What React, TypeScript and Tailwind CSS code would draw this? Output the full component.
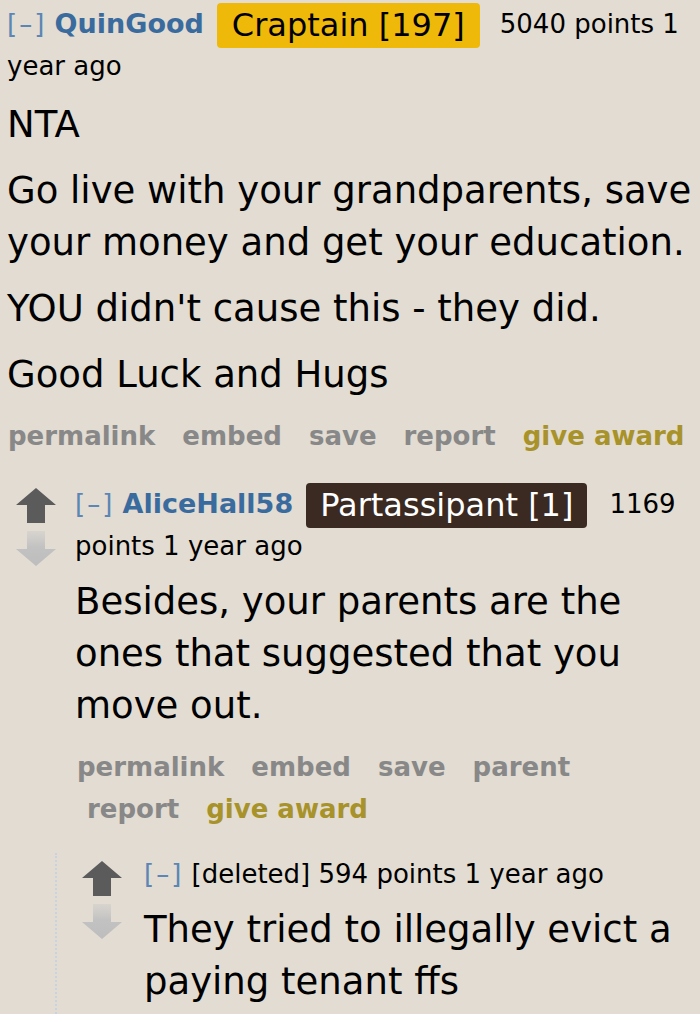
import React from "react";

const font = { fontFamily: '"DejaVu Sans", Verdana, sans-serif' };

function UpArrow() {
  return (
    <svg width="40" height="35" viewBox="0 0 40 35" className="block">
      <path d="M20 0 L40 17 L29 17 L29 35 L11 35 L11 17 L0 17 Z" fill="#5b5b5b" />
    </svg>
  );
}

function DownArrow() {
  return (
    <svg width="40" height="35" viewBox="0 0 40 35" className="block">
      <defs>
        <linearGradient id="dg" x1="0" y1="0" x2="0" y2="1">
          <stop offset="0" stopColor="#c8c8c8" stopOpacity="0.4" />
          <stop offset="0.45" stopColor="#c2c2c2" />
          <stop offset="1" stopColor="#bdbdbd" />
        </linearGradient>
      </defs>
      <path d="M20 35 L40 18 L29 18 L29 0 L11 0 L11 18 L0 18 Z" fill="url(#dg)" />
    </svg>
  );
}

function Arrows() {
  return (
    <div className="flex flex-col gap-[8px] shrink-0">
      <UpArrow />
      <DownArrow />
    </div>
  );
}

function Actions({ items }: { items: string[] }) {
  return (
    <ul className="flex flex-wrap text-[26px] font-bold leading-[42px] text-[#888888]">
      {items.map((it, i) => (
        <li
          key={it}
          className={`${i === 0 ? "pl-0" : "pl-[10px]"} pr-[17px] last:pr-0 ${
            it === "give award" ? "text-[#a8922a]" : ""
          }`}
        >
          {it}
        </li>
      ))}
    </ul>
  );
}

function Collapse() {
  return <span className="text-[#5b86b5] tracking-[2px]">[–]</span>;
}

export default function App() {
  return (
    <div className="min-h-[1014px] w-[700px] bg-[#e2dcd2] text-black overflow-hidden" style={font}>
      {/* comment 1 */}
      <div className="pl-[7px] pr-[6px] pt-[3px]">
        <p className="text-[26px] leading-[42px]">
          <Collapse />{" "}
          <span className="font-bold text-[27px] text-[#3a6b9e]">QuinGood</span>
          <span className="inline-block align-middle my-[-3px] ml-[13px] mr-[20px] rounded-[4px] bg-[#efb90a] px-[15px] text-[32px] leading-[45px]">
            Craptain [197]
          </span>
          <span>5040 points 1 year ago</span>
        </p>
        <div className="mt-[12px] text-[37px] leading-[52px] flex flex-col gap-[14px]">
          <p>NTA</p>
          <p>Go live with your grandparents, save your money and get your education.</p>
          <p>YOU didn't cause this - they did.</p>
          <p>Good Luck and Hugs</p>
        </div>
        <div className="mt-[14px] pl-[1px]">
          <Actions items={["permalink", "embed", "save", "report", "give award"]} />
        </div>
      </div>

      {/* comment 2 */}
      <div className="mt-[26px] pl-[16px]">
        <div className="flex">
          <div className="pt-[5px]">
            <Arrows />
          </div>
          <div className="ml-[19px] flex-1 pr-[6px]">
            <p className="text-[26px] leading-[42px]">
              <Collapse />{" "}
              <span className="font-bold text-[27px] text-[#3a6b9e]">AliceHall58</span>
              <span className="inline-block align-middle my-[-3px] ml-[13px] mr-[22px] rounded-[4px] bg-[#3b2a21] px-[14px] text-[32px] leading-[45px] text-white">
                Partassipant [1]
              </span>
              <span>1169 points 1 year ago</span>
            </p>
            <div className="mt-[9px] text-[37px] leading-[52px]">
              <p>Besides, your parents are the ones that suggested that you move out.</p>
            </div>
            <div className="mt-[14px] pl-[2px] max-w-[580px]">
              <Actions items={["permalink", "embed", "save", "parent", "report", "give award"]} />
            </div>
          </div>
        </div>

        {/* comment 3 */}
        <div className="mt-[23px] ml-[39px] border-l-2 border-dotted border-[#c9d2e0] pl-[25px] pb-[30px]">
          <div className="flex">
            <div className="pt-[8px]">
              <Arrows />
            </div>
            <div className="ml-[22px] flex-1">
              <p className="text-[26px] leading-[42px]">
                <Collapse /> [deleted] 594 points 1 year ago
              </p>
              <div className="mt-[9px] text-[37px] leading-[52px]">
                <p>They tried to illegally evict a paying tenant ffs</p>
              </div>
            </div>
          </div>
        </div>
      </div>
    </div>
  );
}
